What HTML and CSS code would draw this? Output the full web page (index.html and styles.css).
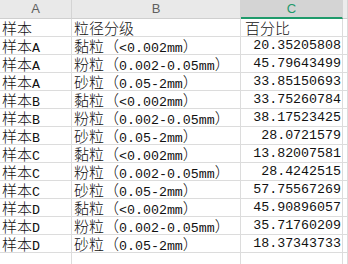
FILE: index.html
```html
<!DOCTYPE html>
<html lang="zh">
<head>
<meta charset="utf-8">
<link rel="stylesheet" href="styles.css">
</head>
<body>
<div class="sheet">
  <div class="h">A</div><div class="h">B</div><div class="h sel">C</div><div class="h last"></div>

  <div class="c">样本</div><div class="c">粒径分级</div><div class="c cj">百分比</div><div class="c"></div>

  <div class="c">样本<span class="l">A</span></div><div class="c">黏粒（<span class="l">&lt;0.002mm</span>）</div><div class="c n">20.35205808</div><div class="c"></div>
  <div class="c">样本<span class="l">A</span></div><div class="c">粉粒（<span class="l">0.002-0.05mm</span>）</div><div class="c n">45.79643499</div><div class="c"></div>
  <div class="c">样本<span class="l">A</span></div><div class="c">砂粒（<span class="l">0.05-2mm</span>）</div><div class="c n">33.85150693</div><div class="c"></div>

  <div class="c">样本<span class="l">B</span></div><div class="c">黏粒（<span class="l">&lt;0.002mm</span>）</div><div class="c n">33.75260784</div><div class="c"></div>
  <div class="c">样本<span class="l">B</span></div><div class="c">粉粒（<span class="l">0.002-0.05mm</span>）</div><div class="c n">38.17523425</div><div class="c"></div>
  <div class="c">样本<span class="l">B</span></div><div class="c">砂粒（<span class="l">0.05-2mm</span>）</div><div class="c n">28.0721579</div><div class="c"></div>

  <div class="c">样本<span class="l">C</span></div><div class="c">黏粒（<span class="l">&lt;0.002mm</span>）</div><div class="c n">13.82007581</div><div class="c"></div>
  <div class="c">样本<span class="l">C</span></div><div class="c">粉粒（<span class="l">0.002-0.05mm</span>）</div><div class="c n">28.4242515</div><div class="c"></div>
  <div class="c">样本<span class="l">C</span></div><div class="c">砂粒（<span class="l">0.05-2mm</span>）</div><div class="c n">57.75567269</div><div class="c"></div>

  <div class="c">样本<span class="l">D</span></div><div class="c">黏粒（<span class="l">&lt;0.002mm</span>）</div><div class="c n">45.90896057</div><div class="c"></div>
  <div class="c">样本<span class="l">D</span></div><div class="c">粉粒（<span class="l">0.002-0.05mm</span>）</div><div class="c n">35.71760209</div><div class="c"></div>
  <div class="c">样本<span class="l">D</span></div><div class="c">砂粒（<span class="l">0.05-2mm</span>）</div><div class="c n">18.37343733</div><div class="c"></div>

  <div class="c"></div><div class="c"></div><div class="c"></div><div class="c"></div>
</div>
</body>
</html>
```

FILE: styles.css
```css
html, body {
  margin: 0;
  padding: 0;
  background: #ffffff;
  overflow: hidden;
}

.sheet {
  display: grid;
  grid-template-columns: 72px 169px 102px 1fr;
  grid-auto-rows: 18px;
  grid-template-rows: 19px;
  width: 348px;
  font-family: "Noto Sans CJK SC", "Liberation Mono", sans-serif;
  font-size: 15px;
  font-weight: 300;
  color: #111111;
}

.h {
  background: #e9e9e9;
  border-right: 1px solid #d4d4d4;
  border-bottom: 1px solid #cfcfcf;
  font-family: "Liberation Sans", "Noto Sans", sans-serif;
  font-weight: 400;
  font-size: 13px;
  line-height: 18px;
  color: #5f5f5f;
  text-align: center;
  box-sizing: border-box;
}

.h.sel {
  background: #d4d4d4;
  color: #1f9a6b;
  border-bottom: 2px solid #1f9a6b;
  line-height: 17px;
}

.h.last {
  background: #ececec;
}

.c {
  border-right: 1px solid #dcdcdc;
  border-bottom: 1px solid #dcdcdc;
  box-sizing: border-box;
  padding: 1px 2px 0 2px;
  line-height: 16px;
  white-space: nowrap;
  overflow: hidden;
}

.cj {
  padding-left: 4px;
}

.l, .n {
  font-family: "Liberation Mono", monospace;
  font-size: 13.3px;
  font-weight: 400;
}

.n {
  text-align: right;
  padding-right: 1px;
}
```
